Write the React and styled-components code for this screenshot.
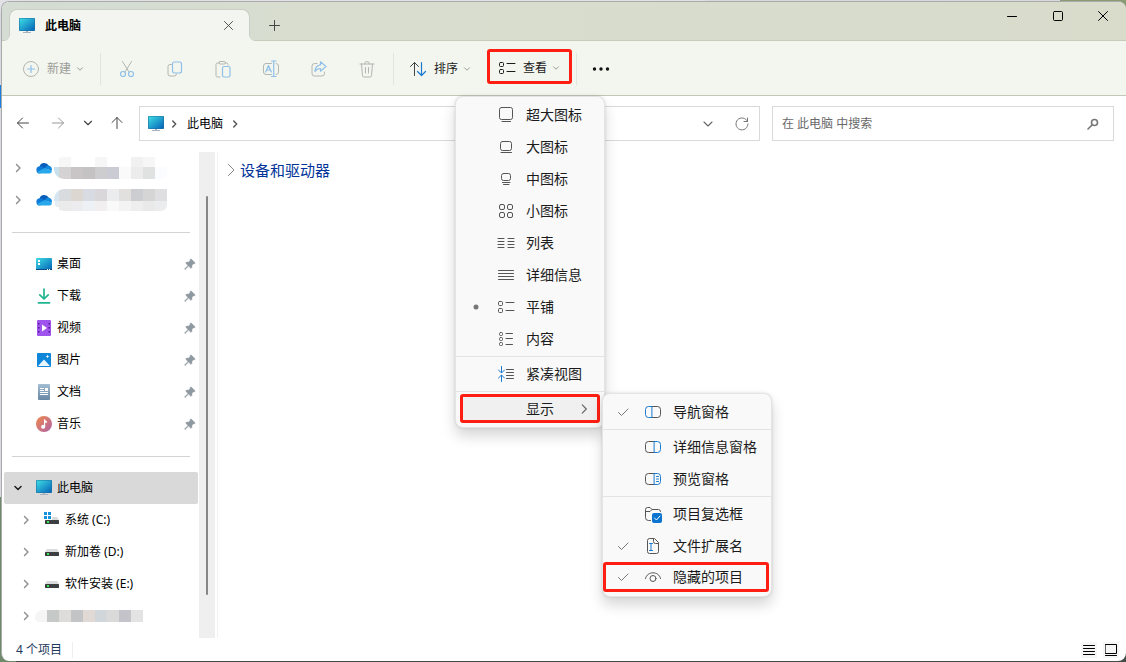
import React from 'react';
import styled, { createGlobalStyle, css } from 'styled-components';

const GlobalStyle = createGlobalStyle`
  *, *::before, *::after { box-sizing: border-box; }
  body { margin: 0; font-family: "Noto Sans", "Noto Sans CJK SC", sans-serif; font-size: 12px; line-height: 16px; color: #000; }
  button, input { font: inherit; color: inherit; }
  button { border: 0; padding: 0; background: none; cursor: default; }
  ul { list-style: none; margin: 0; padding: 0; }
  svg { display: block; flex: none; }
`;

const Desktop = styled.div`
  min-height: 100vh;
  display: flex;
  padding: 1px 0 1px 1px;
  background:
    linear-gradient(90deg, #e2e2e6 0 705px, #d9d9dd 705px 1060px, #8a9a72 1060px) top / 100% 12px no-repeat,
    linear-gradient(#444b47, #444b47) bottom right / calc(100% - 16px) 12px no-repeat,
    linear-gradient(#d9d9e2 0 85px, #1a7fe0 85px 108px, #d9d9e2 108px 497px, #6f8a6a 497px);
`;
const Window = styled.div`
  flex: 1;
  min-width: 0;
  display: flex;
  flex-direction: column;
  border: 1px solid #a9abab;
  border-width: 1px 0 0 1px;
  border-radius: 8px;
  background: #fff;
`;
const TitleBar = styled.header`
  display: flex;
  align-items: flex-end;
  height: 39px;
  padding-left: 7px;
  border-bottom: 1px solid #c7cbb9;
  border-radius: 7px 7px 0 0;
  background: linear-gradient(90deg, #d4dcd3, #d8ddcf 30%, #d9dccb);
`;
const Tab = styled.div`
  position: relative;
  display: flex;
  align-items: center;
  width: 241px;
  height: 32px;
  margin-bottom: -1px;
  padding: 0 9px;
  gap: 10px;
  border: 1px solid #c9cfc4;
  border-width: 1px 1px 0;
  border-radius: 8px 8px 0 0;
  background: #f3f5f1;
  font-weight: 700;
  &::before, &::after {
    content: "";
    position: absolute;
    bottom: 0;
    width: 5px;
    height: 5px;
    background: radial-gradient(circle at 0 0, transparent 4px, #f3f5f1 5px);
  }
  &::before { left: -5px; }
  &::after { right: -5px; transform: scaleX(-1); }
`;
const TabTitle = styled.span`flex: 1;`;
const IconButton = styled.button`
  display: grid;
  place-items: center;
  flex: none;
  width: ${(p) => p.$w || 24}px;
  height: ${(p) => p.$h || 24}px;
  color: ${(p) => p.$color || '#444'};
`;
const NewTab = styled(IconButton)`margin: 0 auto 3px 12px;`;
const Caption = styled.div`display: flex; align-self: flex-start;`;

const CommandBar = styled.div`
  display: flex;
  align-items: center;
  height: 55px;
  padding: 1px 0 0 7px;
  border-bottom: 1px solid #c3c7b8;
  background: #f3f5ef;
`;
const Command = styled.button`
  display: flex;
  align-items: center;
  height: 35px;
  padding: 0 ${(p) => p.$pad || 8}px;
  color: ${(p) => (p.$off ? '#9b9d99' : '#1b1b1b')};
  border-radius: 3px;
  ${(p) => p.$marked && css`padding-top: 3px; border: 3px solid #ff1f12;`}
`;
const CommandText = styled.span`margin: 0 4px 0 7px;`;
const CommandArrow = styled.span`color: #8a8c88;`;
const Rule = styled.i`
  width: 1px;
  height: 32px;
  margin: 0 ${(p) => p.$gap || 2}px;
  background: #e2e4de;
`;
const MenuAnchor = styled.div`
  position: relative;
  align-self: flex-start;
  margin: 7px 0 0 2px;
`;

const AddressRow = styled.div`
  display: grid;
  grid-template-columns: 137px minmax(0, 621fr) minmax(0, 354fr);
  padding: 10px 12px 11px 0;
`;
const NavButtons = styled.nav`
  display: flex;
  align-items: center;
  padding: 0 0 1px 4px;
`;
const Field = styled.div`
  display: flex;
  align-items: center;
  height: 35px;
  padding: 0 ${(p) => p.$end}px 0 8px;
  border: 1px solid #d9d9d9;
  background: #fff;
  & + & { margin-left: 12px; }
`;
const CrumbArrow = styled.span`color: #555;`;
const FirstCrumbArrow = styled(CrumbArrow)`margin-left: 5px;`;
const Crumb = styled.button`height: 24px; margin: 0 7px 0 8px;`;
const Spacer = styled.span`flex: 1;`;
const SearchInput = styled.input`
  flex: 1;
  min-width: 0;
  border: 0;
  outline: 0;
  padding: 0 1px;
  background: none;
  &::placeholder { color: #696969; opacity: 1; }
`;

const Main = styled.div`flex: 1; display: flex; min-height: 0;`;
const Sidebar = styled.aside`
  display: flex;
  width: 216px;
  padding-right: 2px;
  border-right: 1px solid #f2f2f2;
`;
const Tree = styled.ul`flex: 1; padding: 0 1px 5px 2px;`;
const TreeRow = styled.li`
  display: flex;
  align-items: center;
  height: 32px;
  padding: 0 2px 0 ${(p) => (p.$child ? 16 : 8)}px;
  border-radius: 2px;
  background: ${(p) => (p.$selected ? '#d9d9d9' : 'none')};
`;
const Expander = styled.span`width: 12px; height: 12px; color: ${(p) => (p.$open ? '#222' : '#8a8a8a')};`;
const Glyph = styled.span`
  width: 16px;
  margin: 0 ${(p) => (p.$tight ? 2 : 5)}px 0 12px;
`;
const CoveredDrive = styled.span`margin-left: 3px;`;
const TreeText = styled.span`flex: 1; white-space: nowrap;`;
const TreeRule = styled.li`
  height: 32px;
  padding: 16px 8px 0;
  &::before { content: ""; display: block; height: 1px; background: #d3d3d3; }
`;
const ScrollTrack = styled.div`width: 16px; padding: 44px 7px 43px; background: #efefef;`;
const ScrollThumb = styled.div`height: 100%; border-radius: 1px; background: #868686;`;
const Content = styled.main`flex: 1; padding: 8px 8px;`;
const GroupHeader = styled.h2`
  display: flex;
  align-items: center;
  gap: 4px;
  margin: 0;
  font-size: 15px;
  line-height: 20px;
  font-weight: 400;
  color: #003399;
`;
const StatusBar = styled.footer`
  display: flex;
  align-items: center;
  justify-content: space-between;
  height: 23px;
  padding: 0 7px 0 14px;
  color: #1e395b;
`;
const StatusText = styled.span`padding-right: 10px; border-right: 1px solid #eee;`;
const ViewModes = styled.div`display: flex; gap: 6px;`;
const ModeButton = styled(IconButton)`background: #f6f6f6; width: 16px; height: 16px;`;

const MenuPanel = styled.div`
  position: absolute;
  z-index: 2;
  left: ${(p) => p.$left}px;
  top: ${(p) => p.$top}px;
  width: ${(p) => p.$width}px;
  padding: 2px 0 ${(p) => p.$bottom}px;
  border: 1px solid #e4e4e4;
  border-radius: 8px;
  background: #f9f9f9;
  box-shadow: 0 8px 14px rgba(0, 0, 0, 0.16), 0 0 3px rgba(0, 0, 0, 0.12);
`;
const MenuItem = styled.button`
  display: flex;
  align-items: center;
  width: 100%;
  height: 32px;
  padding-left: 12px;
  font-size: 14px;
  line-height: 20px;
  color: #1b1b1b;
  white-space: nowrap;
`;
const MarkedItem = styled(MenuItem)`
  width: auto;
  align-self: stretch;
  height: ${(p) => p.$h}px;
  margin: ${(p) => p.$top || 0}px ${(p) => p.$right}px 0 ${(p) => p.$left}px;
  padding-left: ${(p) => 9 - p.$left}px;
  border: 3px solid #ff1f12;
  border-radius: 3px;
  background: ${(p) => p.$bg || 'none'};
`;
const MenuStack = styled.div`display: flex; flex-direction: column;`;
const Mark = styled.span`display: grid; place-items: center; width: 16px; color: #777;`;
const MenuGlyph = styled.span`
  display: grid;
  place-items: center;
  width: 18px;
  margin: 0 11px 0 13px;
  color: #555;
`;
const MenuLabel = styled.span`flex: 1; text-align: left;`;
const MenuArrow = styled.span`margin-right: 6px; color: #666;`;
const MenuRule = styled.i`height: 1px; margin: 1px 0; background: #e3e3e3;`;
const SubmenuAnchor = styled.div`position: relative; display: flex; flex-direction: column;`;

const Draw = ({ size = 18, w, h, sw = 1, children, ...rest }) => (
  <svg width={w || size} height={h || size} viewBox={`0 0 ${w || size} ${h || size}`} fill="none" stroke="currentColor"
    strokeWidth={sw} strokeLinecap="round" strokeLinejoin="round" aria-hidden="true" {...rest}>{children}</svg>
);
const Chevron = ({ dir = 'down', size = 12, sw = 1 }) => {
  const d = { down: 'M3 4.5 6 7.5 9 4.5', right: 'M4.5 2.5 8 6 4.5 9.5' }[dir];
  return <Draw size={size} sw={sw} viewBox="0 0 12 12"><path d={d} /></Draw>;
};
const Cross = ({ size = 10 }) => <Draw size={size} viewBox="0 0 10 10"><path d="M.5.5l9 9M9.5.5l-9 9" /></Draw>;

const Monitor = () => (
  <svg width="16" height="16" viewBox="0 0 16 16" aria-hidden="true">
    <defs>
      <linearGradient id="screen" x1="0" y1="0" x2="1" y2="1">
        <stop offset="0" stopColor="#3ddde4" /><stop offset="1" stopColor="#0563b8" />
      </linearGradient>
    </defs>
    <path d="M7 12h2v2h3v1H4v-1h3z" fill="#a9b3bd" />
    <rect width="16" height="13" y="0" rx="1" fill="#1e6f9f" />
    <rect x=".6" y=".6" width="14.8" height="11.8" rx=".5" fill="url(#screen)" />
  </svg>
);
const Cloud = () => (
  <svg width="16" height="12" viewBox="0 0 16 12" aria-hidden="true">
    <path d="M3.500 4.500A5 5 0 0 1 12.700 3.600L10 8 4 7z" fill="#0a5fbd" />
    <path d="M4 4.300c2 0 3 1 6 3.700l-6 3.500a3.500 3.500 0 0 1 0-7.200z" fill="#0c7ad8" />
    <path d="M9 6c1-1.800 2.400-2.500 3.700-2.400A3.800 3.800 0 0 1 15.500 9z" fill="#1289dc" />
    <path d="M1.200 9.800 9 6l6.600 2.800c.6 1.400-.4 2.700-2.100 2.700H4a3.500 3.500 0 0 1-2.800-1.700z" fill="#28a8ea" />
  </svg>
);
const DesktopIcon = () => (
  <svg width="16" height="12" viewBox="0 0 16 12" aria-hidden="true">
    <rect width="16" height="12" rx="1" fill="url(#screen)" />
    <path d="M2 2h2v2H2zM2 5h2v2H2z" fill="#fff" /><path d="M0 11h16v1H0z" fill="#074a86" />
    <path d="M11 11h1v1h-1zM13 11h1v1h-1z" fill="#fff" />
  </svg>
);
const DownloadIcon = () => (
  <Draw size={16} sw={1.7} stroke="#1fb58f"><path d="M8 1v9.500M3.800 6.800 8 11l4.200-4.200M2.500 14.900h11" /></Draw>
);
const VideoIcon = () => (
  <svg width="16" height="16" viewBox="0 0 16 16" aria-hidden="true">
    <rect x="1" width="14" height="16" rx="1" fill="#a054ee" />
    <path d="M2 3h1.500v1.500H2zM2 7h1.500v1.500H2zM2 11h1.500v1.500H2zM12.500 3H14v1.500h-1.500zM12.500 7H14v1.500h-1.500zM12.500 11H14v1.500h-1.500z" fill="#4b1d86" />
    <path d="M6 4.500 11 8l-5 3.500z" fill="#fff" />
  </svg>
);
const PictureIcon = () => (
  <svg width="16" height="16" viewBox="0 0 16 16" aria-hidden="true">
    <rect x="1" y="1" width="14" height="14" rx="1" fill="#0f86d8" />
    <path d="M2 14 8 7.500 14 14z" fill="#e8f6ff" />
    <path d="M11.500 2.500l.5 1.500 1.500.5-1.500.5-.5 1.500L11 5l-1.500-.5L11 4z" fill="#fff" />
  </svg>
);
const DocumentIcon = () => (
  <svg width="16" height="16" viewBox="0 0 16 16" aria-hidden="true">
    <defs><linearGradient id="doc" x1="0" y1="0" x2="0" y2="1"><stop stopColor="#a3bdd2" /><stop offset="1" stopColor="#6887a5" /></linearGradient></defs>
    <rect x="2" width="12" height="16" rx="1" fill="url(#doc)" />
    <path d="M4 4h4v1H4zM4 6h4v1H4zM9 4h3v3H9zM4 8h8v1H4zM4 10h8v1H4z" fill="#fff" />
  </svg>
);
const MusicIcon = () => (
  <svg width="16" height="16" viewBox="0 0 16 16" aria-hidden="true">
    <defs><linearGradient id="music" x1="0" y1="0" x2="1" y2="1"><stop stopColor="#f08a4b" /><stop offset="1" stopColor="#b061a8" /></linearGradient></defs>
    <circle cx="8" cy="8" r="8" fill="url(#music)" />
    <path d="M8 3.200h1c.2 1.400 1 1.800 2 2v1.600c-.8 0-1.400-.3-1.800-.6v4.500A2 2 0 1 1 8 9z" fill="#fff" />
  </svg>
);
const DriveIcon = ({ system }) => (
  <svg width="16" height="16" viewBox="0 0 16 16" aria-hidden="true">
    <path d="M3 5h10l2 3H1z" fill="#d9dbde" /><rect x="1" y="8" width="14" height="4" rx=".5" fill="#3c3f42" />
    <rect x="3" y="9" width="2" height="2" fill="#3ce04c" />
    {system && <g><path d="M0 0h8v8H0z" fill="#fff" /><path d="M0 0h3v3H0zM4 0h3v3H4zM0 4h3v3H0zM4 4h3v3H4z" fill="#1590dd" /></g>}
  </svg>
);
const Pin = () => (
  <svg width="12" height="12" viewBox="0 0 12 12" aria-hidden="true">
    <path d="M7 .8 11.200 5 10.200 6 9.500 5.700 8 7.300 7.800 9.600 7 10.400 4.600 8 1 11.500.5 11 4 7.400 1.600 5l.8-.8L4.700 4 6.300 2.500 6 1.800z" fill="#8f99a1" stroke="#8f99a1" strokeWidth=".5" />
  </svg>
);

/* Blocks that cover private names: [x, y, width, height, colour] */
const strip = (colors, x, y, h) => colors.map((c, i) => [x + i * 12, y, 12, h, c]);
const MOSAICS = {
  first: [
    [0, 10, 5, 11, '#c8e0ec'],
    ...strip(['#d4d2d3', '#c9c5c7', '#c4c2c3', '#cdcccf', '#cbccd3', '#fafafb', '#ebeceb', '#dfe2e1', '#fbfcff'], 5, 10, 12),
    ...strip(['#f6f6f6', '#fff', '#fff', '#f6f6f6', '#fff', '#fff', '#f1f1f1', '#f6f6f6'], 5, 0, 10),
  ],
  second: [
    [0, 0, 5, 12, '#d6e6f0'], [1, 12, 4, 6, '#e6eef2'],
    ...strip(['#d9dcdf', '#dcd7d1', '#d8dbe2', '#d9d7da', '#ebecee', '#e2e0df', '#cccdd1', '#d6d5d6', '#dfdfe1'], 5, 0, 12),
    ...strip(['#ebebeb', '#ececee', '#edf0f4', '#f2eff0', '#f9f9f9', '#f3f3f3', '#eeeeef', '#e8e9e8', '#ebeced'], 5, 12, 10),
  ],
  drive: strip(['#f5f5f5', '#c5c9c8', '#dddcda', '#c3c4c6', '#e0d9d5', '#d0d6da', '#d9dad9', '#c4c3c9', '#e3e3e3'], 0, 0, 12),
};
const MosaicArt = styled.svg`border-radius: 10px 0 6px ${(p) => (p.$tall ? 10 : 6)}px;`;
const Mosaic = ({ kind }) => (
  <MosaicArt $tall={kind !== 'drive'} width="113" height={kind === 'drive' ? 12 : 22} shapeRendering="crispEdges" aria-hidden="true">
    {MOSAICS[kind].map(([x, y, w, h, c]) => <rect key={`${x}-${y}`} x={x} y={y} width={w} height={h} fill={c} />)}
  </MosaicArt>
);

const gray = '#b4b7b1';
const blue = '#8fc0e8';
const commandIcons = {
  剪切: <Draw stroke={gray}><path d="M4.500 1.500 11 12M13.500 1.500 7 12" /><g stroke={blue} strokeWidth="1.200"><circle cx="5" cy="14" r="2.500" /><circle cx="13" cy="14" r="2.500" /></g></Draw>,
  复制: <Draw stroke={gray}><path d="M5.500 4.500H4a2 2 0 0 0-2 2V14a2 2 0 0 0 2 2h4.500a2 2 0 0 0 2-2" /><rect x="6.500" y="2" width="9" height="11" rx="2" stroke={blue} strokeWidth="1.200" /></Draw>,
  粘贴: <Draw stroke={gray}><path d="M5.500 3H3.500a1.500 1.500 0 0 0-1.500 1.500v11A1.500 1.500 0 0 0 3.500 17H6M11 3h1.500A1.500 1.500 0 0 1 14 4.500V5" /><rect x="5" y="1.500" width="6.500" height="2.500" rx="1.200" /><rect x="8.500" y="6.500" width="7.500" height="10.500" rx="1.500" stroke={blue} strokeWidth="1.200" /></Draw>,
  重命名: <Draw stroke={gray}><path d="M9.500 3.500H4a2.500 2.500 0 0 0-2.500 2.500v6A2.500 2.500 0 0 0 4 14.500h5.500M14 3.500a2.500 2.500 0 0 1 2.500 2.500v6a2.500 2.500 0 0 1-2.500 2.500" /><path d="M9.500 1h4.500M9.500 16.500h4.500M11.700 1v15.500M3.700 12 6.500 5.500 9.300 12M4.700 10h3.600" stroke={blue} strokeWidth="1.200" /></Draw>,
  共享: <Draw stroke={gray}><path d="M7 3.500H4.500A2.500 2.500 0 0 0 2 6v7.500A2.500 2.500 0 0 0 4.500 16H12a2.500 2.500 0 0 0 2.500-2.500V12" /><path d="M10.500 1.800 16 6.500l-5.500 4.700V8.500C8 8.500 6.300 9.500 5 11.500c.3-3.800 2.300-6.400 5.500-6.700z" stroke={blue} strokeWidth="1.200" /></Draw>,
  删除: <Draw stroke={gray}><path d="M2 4h14M6.500 4a2.500 2.500 0 0 1 5 0M3.500 4l1 11.500A1.500 1.500 0 0 0 6 17h6a1.500 1.500 0 0 0 1.500-1.500l1-11.500M7.500 7.500v5.500M10.500 7.500v5.500" /></Draw>,
};
const NewIcon = () => (
  <Draw stroke={gray}><circle cx="9" cy="9" r="7.500" /><path d="M9 5.500v7M5.500 9h7" stroke={blue} strokeWidth="1.200" /></Draw>
);
const TilesIcon = () => <Draw><rect x="1.500" y="3.500" width="4" height="4" rx="1" /><rect x="1.500" y="10.500" width="4" height="4" rx="1" /><path d="M9 4.500h8M9 12.500h8" /></Draw>;
const lines = (y) => y.map((v) => `M1 ${v}h6M11 ${v}h6`).join('');
const VIEWS = [
  ['超大图标', <Draw><rect x="2.500" y="1.500" width="13" height="12" rx="2" /><path d="M5 15.500h8.500" /></Draw>],
  ['大图标', <Draw><rect x="3.500" y="3.500" width="11" height="9" rx="2" /><path d="M4 14.500h10.500" /></Draw>],
  ['中图标', <Draw><rect x="4.500" y="3.500" width="9" height="7" rx="2" /><path d="M5.500 12.500h7.500M6.500 14.500h5.500" /></Draw>],
  ['小图标', <Draw><rect x="2.500" y="2.500" width="5" height="5" rx="1.500" /><rect x="10.500" y="2.500" width="5" height="5" rx="1.500" /><rect x="2.500" y="10.500" width="5" height="5" rx="1.500" /><rect x="10.500" y="10.500" width="5" height="5" rx="1.500" /></Draw>],
  ['列表', <Draw><path d={lines([4.5, 7.5, 10.5, 13.5])} /></Draw>],
  ['详细信息', <Draw><path d="M1.500 4.500h15M1.500 7.500h15M1.500 10.500h15M1.500 13.500h15" /></Draw>],
  ['平铺', <TilesIcon />],
  ['内容', <Draw><rect x="2.500" y="2.500" width="3" height="3" rx="1" /><rect x="2.500" y="7.500" width="3" height="3" rx="1" /><rect x="2.500" y="12.500" width="3" height="3" rx="1" /><path d="M9 3.500h6.500M9 8.500h6.500M9 14.500h6.500" /></Draw>],
];
const accent = '#1a7ad0';
const Check = () => <Draw size={12}><path d="M1.500 6.500 4.500 9.500 11 3" /></Draw>;
const PaneFrame = ({ children, side }) => (
  <Draw>
    <path d={side === 'left' ? 'M7.500 3.500h6A3 3 0 0 1 16.500 6.500v5a3 3 0 0 1-3 3h-6' : 'M10.500 3.500h-6A3 3 0 0 0 1.500 6.500v5a3 3 0 0 0 3 3h6'} />
    <path stroke={accent} d={side === 'left' ? 'M7.500 3.500h-3A3 3 0 0 0 1.500 6.500v5a3 3 0 0 0 3 3h3z' : 'M10.500 3.500h3A3 3 0 0 1 16.500 6.500v5a3 3 0 0 1-3 3h-3z'} />
    {children}
  </Draw>
);
const CheckBoxFolder = () => (
  <Draw><path d="M6.500 15.500h-2a3 3 0 0 1-3-3v-8a2 2 0 0 1 2-2H6l2 2h6.500a2 2 0 0 1 2 2M1.500 6.500H6l2-2" /><rect x="8" y="8" width="10" height="10" rx="2" fill="#0b73d0" stroke="none" /><path d="M10.500 13l2 2 3.500-4" stroke="#fff" /></Draw>
);
const ExtensionFile = () => (
  <Draw><path d="M14.500 6.500v8a2 2 0 0 1-2 2h-7a2 2 0 0 1-2-2v-11a2 2 0 0 1 2-2h5l4 4zM9.500 1.500v3a2 2 0 0 0 2 2h3" /><path d="M5.500 6.500h3M7 6.500v7M5.500 13.500h3" stroke={accent} /></Draw>
);
const Eye = () => <Draw><path d="M1.500 10.500C3 2.800 15 2.800 16.500 10.500" /><circle cx="9" cy="10.500" r="3" /></Draw>;

function Item({ label, icon, mark, as: Kind = MenuItem, role = 'menuitem', checked, arrow, ...rest }) {
  return (
    <Kind type="button" role={role} aria-checked={checked} {...rest}>
      <Mark>{mark}</Mark>
      <MenuGlyph>{icon}</MenuGlyph>
      <MenuLabel>{label}</MenuLabel>
      {arrow}
    </Kind>
  );
}

function ShowMenu() {
  return (
    <MenuPanel role="menu" aria-label="显示" $left={146} $top={0} $width={170} $bottom={4}>
      <MenuStack>
        <Item label="导航窗格" icon={<PaneFrame side="left" />} mark={<Check />} role="menuitemcheckbox" checked />
        <MenuRule />
        <Item label="详细信息窗格" icon={<PaneFrame />} role="menuitemcheckbox" checked={false} />
        <Item label="预览窗格" icon={<PaneFrame><path stroke={accent} d="M12.500 6.500h2M12.500 9h2M12.500 11.500h2" /></PaneFrame>} role="menuitemcheckbox" checked={false} />
        <MenuRule />
        <Item label="项目复选框" icon={<CheckBoxFolder />} role="menuitemcheckbox" checked={false} />
        <Item label="文件扩展名" icon={<ExtensionFile />} mark={<Check />} role="menuitemcheckbox" checked />
        <Item as={MarkedItem} $h={30} $left={0} $right={2} label="隐藏的项目" icon={<Eye />} mark={<Check />} role="menuitemcheckbox" checked />
      </MenuStack>
    </MenuPanel>
  );
}

function ViewMenu() {
  return (
    <MenuPanel role="menu" aria-label="查看" $left={-32} $top={47} $width={150} $bottom={4}>
      <MenuStack>
        {VIEWS.map(([label, icon]) => (
          <Item key={label} label={label} icon={icon} role="menuitemradio" checked={label === '平铺'}
            mark={label === '平铺' && <Draw size={6}><circle cx="3" cy="3" r="2.500" fill="currentColor" stroke="none" /></Draw>} />
        ))}
        <MenuRule />
        <Item label="紧凑视图" icon={<Draw><path d="M9.500 4.500h7M9.500 7.500h7M9.500 10.500h7M9.500 13.500h7" /><path stroke={accent} d="M4.500 1.500v6M1.500 5l3 3 3-3M4.500 16.500v-6M1.500 13l3-3 3 3" /></Draw>} />
        <MenuRule />
        <SubmenuAnchor>
          <Item as={MarkedItem} $h={29} $top={1} $left={4} $right={4} $bg="#f0f0f0" label="显示" aria-haspopup="menu" aria-expanded
            arrow={<MenuArrow><Chevron dir="right" size={14} /></MenuArrow>} />
          <ShowMenu />
        </SubmenuAnchor>
      </MenuStack>
    </MenuPanel>
  );
}

const QUICK = [
  ['桌面', <DesktopIcon />], ['下载', <DownloadIcon />], ['视频', <VideoIcon />],
  ['图片', <PictureIcon />], ['文档', <DocumentIcon />], ['音乐', <MusicIcon />],
];
const DRIVES = [['系统 (C:)', true], ['新加卷 (D:)', false], ['软件安装 (E:)', false]];

export default function App() {
  return (
    <Desktop>
      <GlobalStyle />
      <Window>
        <TitleBar>
          <Tab>
            <Monitor />
            <TabTitle>此电脑</TabTitle>
            <IconButton aria-label="关闭标签页"><Cross size={9} /></IconButton>
          </Tab>
          <NewTab aria-label="新标签页"><Draw size={11}><path d="M5.500.5v10M.5 5.500h10" /></Draw></NewTab>
          <Caption>
            <IconButton $w={46} $h={28} $color="#000" aria-label="最小化"><Draw size={10}><path d="M.5 5.500h9" /></Draw></IconButton>
            <IconButton $w={45} $h={28} $color="#000" aria-label="最大化"><Draw size={10}><rect x=".5" y=".5" width="9" height="9" rx="1" /></Draw></IconButton>
            <IconButton $w={46} $h={28} $color="#000" aria-label="关闭"><Cross /></IconButton>
          </Caption>
        </TitleBar>

        <CommandBar role="toolbar">
          <Command $off $pad={13}>
            <NewIcon />
            <CommandText>新建</CommandText>
            <CommandArrow><Chevron size={10} /></CommandArrow>
          </Command>
          <Rule />
          {Object.entries(commandIcons).map(([name, icon]) => (
            <IconButton key={name} $w={48} $h={35} aria-label={name}>{icon}</IconButton>
          ))}
          <Rule />
          <Command $pad={13}>
            <Draw><path d="M5.500 15.500v-13M1.500 6.500l4-4 4 4" stroke="#444" /><path d="M12.500 2.500v13M8.500 11.500l4 4 4-4" stroke={accent} strokeWidth="1.200" /></Draw>
            <CommandText>排序</CommandText>
            <CommandArrow><Chevron size={10} /></CommandArrow>
          </Command>
          <MenuAnchor>
            <Command $marked $pad={8} aria-haspopup="menu" aria-expanded>
              <TilesIcon />
              <CommandText>查看</CommandText>
              <CommandArrow><Chevron size={10} /></CommandArrow>
            </Command>
            <ViewMenu />
          </MenuAnchor>
          <Rule $gap={4} />
          <IconButton $w={40} $h={35} aria-label="更多">
            <Draw fill="#111" stroke="none"><circle cx="2.500" cy="9" r="1.700" /><circle cx="9" cy="9" r="1.700" /><circle cx="15.500" cy="9" r="1.700" /></Draw>
          </IconButton>
        </CommandBar>

        <AddressRow>
          <NavButtons>
            <IconButton $w={34} aria-label="后退"><Draw size={14}><path d="M1.500 7h11M6.500 2 1.500 7l5 5" /></Draw></IconButton>
            <IconButton $w={36} $color="#999" aria-label="前进"><Draw size={14}><path d="M1.500 7h11M7.500 2l5 5-5 5" /></Draw></IconButton>
            <IconButton $w={24} aria-label="最近位置"><Chevron size={14} /></IconButton>
            <IconButton $w={34} aria-label="上移"><Draw size={14}><path d="M7 12.500v-11M2 6.500l5-5 5 5" /></Draw></IconButton>
          </NavButtons>
          <Field $end={0}>
            <Monitor />
            <FirstCrumbArrow><Chevron dir="right" size={10} sw={1.8} /></FirstCrumbArrow>
            <Crumb>此电脑</Crumb>
            <CrumbArrow><Chevron dir="right" size={10} sw={1.8} /></CrumbArrow>
            <Spacer />
            <IconButton $w={34} $color="#666" aria-label="历史记录"><Chevron size={16} sw={0.8} /></IconButton>
            <IconButton $w={34} $color="#777" aria-label="刷新"><Draw size={14}><path d="M12.500 4.500A6 6 0 1 0 13 7M12.500 1v3.500H9" /></Draw></IconButton>
          </Field>
          <Field as="label" $end={8}>
            <SearchInput type="text" aria-label="搜索" placeholder="在 此电脑 中搜索" />
            <IconButton as="span" $color="#777"><Draw size={12} sw={1.6}><circle cx="7.500" cy="4.500" r="3" /><path d="M5.300 6.700 1 11" /></Draw></IconButton>
          </Field>
        </AddressRow>

        <Main>
          <Sidebar>
            <Tree>
              {['first', 'second'].map((kind) => (
                <TreeRow key={kind}>
                  <Expander><Chevron dir="right" sw={1.4} /></Expander>
                  <Glyph $tight><Cloud /></Glyph>
                  <Mosaic kind={kind} />
                </TreeRow>
              ))}
              <TreeRule />
              {QUICK.map(([name, icon]) => (
                <TreeRow key={name}>
                  <Expander />
                  <Glyph>{icon}</Glyph>
                  <TreeText>{name}</TreeText>
                  <Pin />
                </TreeRow>
              ))}
              <TreeRule />
              <TreeRow $selected>
                <Expander $open><Chevron size={12} sw={1.6} /></Expander>
                <Glyph><Monitor /></Glyph>
                <TreeText>此电脑</TreeText>
              </TreeRow>
              {DRIVES.map(([name, system]) => (
                <TreeRow key={name} $child>
                  <Expander><Chevron dir="right" sw={1.4} /></Expander>
                  <Glyph><DriveIcon system={system} /></Glyph>
                  <TreeText>{name}</TreeText>
                </TreeRow>
              ))}
              <TreeRow $child>
                <Expander><Chevron dir="right" sw={1.4} /></Expander>
                <CoveredDrive><Mosaic kind="drive" /></CoveredDrive>
              </TreeRow>
            </Tree>
            <ScrollTrack><ScrollThumb /></ScrollTrack>
          </Sidebar>
          <Content>
            <GroupHeader><Draw w={10} h={14} stroke="#888"><path d="M2.500 1.500 8 7l-5.500 5.500" /></Draw>设备和驱动器</GroupHeader>
          </Content>
        </Main>

        <StatusBar>
          <StatusText>4 个项目</StatusText>
          <ViewModes>
            <ModeButton $color="#000" aria-label="详细信息"><Draw size={12}><path d="M.5 1.500h11M.5 4.500h11M.5 7.500h11M.5 10.500h11" /></Draw></ModeButton>
            <ModeButton $color="#000" aria-label="大图标"><Draw size={12}><path d="M.5.5h11v9H.5zM.5 11.500h11" /></Draw></ModeButton>
          </ViewModes>
        </StatusBar>
      </Window>
    </Desktop>
  );
}
